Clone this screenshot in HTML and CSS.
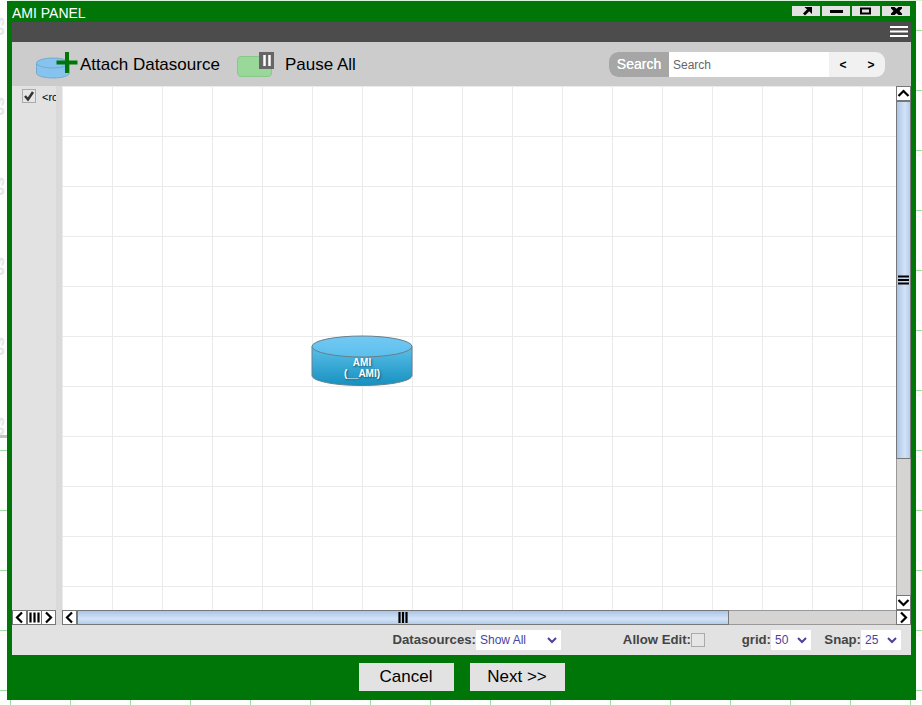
FILE: index.html
```html
<!DOCTYPE html>
<html lang="en">
<head>
<meta charset="utf-8">
<title>AMI Panel</title>
<link rel="stylesheet" href="styles.css">
</head>
<body>
<div class="backdrop">
  <div class="lines left"></div><div class="lines right"></div><div class="lines bottom"></div><div class="lines top"></div>
  <div class="axis"><span>0s</span><span>0s</span><span>0s</span><span>0s</span><span>0s</span><span>0s</span></div>
  <div class="axis-rule"></div>
</div>
<main class="window">
  <header class="titlebar">
    <span class="title">AMI PANEL</span>
    <div class="controls">
      <button><svg width="28" height="10"><path d="M12 8.500l5-5" fill="none" stroke="#000" stroke-width="2.800"/><path d="M12.500 1H20v7l-2.500-2.500-3-2.500z"/></svg></button>
      <button><svg width="28" height="10"><path d="M8 4h13v3H8z"/></svg></button>
      <button><svg width="28" height="10"><path d="M9 2.500h9v5H9z" fill="none" stroke="#000" stroke-width="2"/></svg></button>
      <button><svg width="28" height="10"><path d="M9 1h3.500l2 1.800 2-1.800H20v1.500L17.500 5 20 7.500V9h-3.500l-2-1.800-2 1.800H9V7.500L11.500 5 9 2.500z"/></svg></button>
    </div>
  </header>
  <div class="menubar"><svg width="18" height="11"><path d="M0 1h18M0 5.500h18M0 10h18" stroke="#fff" stroke-width="1.800"/></svg></div>
  <div class="toolbar">
    <svg class="ds-icon" width="42" height="28"><path d="M.5 12v10c0 2.800 7.400 5 16.500 5s16.500-2.200 16.500-5V12" fill="#86c4ef" stroke="#74aace"/><ellipse cx="17" cy="12" rx="16.500" ry="5" fill="#86c4ef" stroke="#74aace"/><path d="M31 1v21M20.500 11.500h21" stroke="#007508" stroke-width="4"/></svg>
    <span class="tool-label attach">Attach Datasource</span>
    <svg class="pause-icon" width="38" height="26"><rect x=".5" y="4.500" width="34" height="20" rx="3.500" fill="#99d899" stroke="#88c888"/><path d="M22 0h15v17H22z" fill="#666"/><path d="M27.500 3v11M32.500 3v11" stroke="#fff" stroke-width="2.500"/></svg>
    <span class="tool-label">Pause All</span>
    <div class="search"><span class="search-tag">Search</span><input type="text" placeholder="Search"><button>&lt;</button><button>&gt;</button></div>
  </div>
  <div class="body">
    <aside class="tree">
      <div class="tree-row"><span class="check"><svg width="12" height="12"><path d="M2 6l3 3.500L10 2" fill="none" stroke="#333" stroke-width="2.500"/></svg></span><span class="root">&lt;root&gt;</span></div>
      <div class="mini-scroll"><span class="sbtn"><svg width="13" height="13"><path d="M9 1.500L4 6.500 9 11.500"/></svg></span><span class="sbtn"><svg width="13" height="13"><path d="M2.500 1.500v10M6.500 1.500v10M10.500 1.500v10"/></svg></span><span class="sbtn"><svg width="13" height="13"><path d="M4 1.500l5 5-5 5"/></svg></span></div>
    </aside>
    <div class="divider"></div>
    <section class="viewer">
      <div class="canvas">
        <div class="node">
          <svg width="102" height="52"><defs><linearGradient id="side" x1="0" y1="0" x2="0" y2="1"><stop offset="0" stop-color="#5bbfe9"/><stop offset="1" stop-color="#1691bf"/></linearGradient><linearGradient id="lid" x1="0" y1="0" x2="0" y2="1"><stop offset="0" stop-color="#74c8f4"/><stop offset="1" stop-color="#5bbfec"/></linearGradient></defs><path d="M1 11.500v29C1 46 23 50.500 51 50.500s50-4.500 50-10v-29" fill="url(#side)" stroke="#667f8b"/><ellipse cx="51" cy="11.500" rx="50" ry="10.500" fill="url(#lid)" stroke="#667f8b"/></svg>
          <div class="node-text">AMI<br>(__AMI)</div>
        </div>
      </div>
      <div class="vscroll"><span class="sbtn"><svg width="13" height="13"><path d="M1.500 9l5-5 5 5"/></svg></span><div class="vthumb"><svg width="11" height="10"><path d="M0 1.500h11M0 5h11M0 8.500h11"/></svg></div><div class="track"></div><span class="sbtn"><svg width="13" height="13"><path d="M1.500 4l5 5 5-5"/></svg></span></div>
      <div class="hscroll"><span class="sbtn"><svg width="13" height="13"><path d="M9 1.500L4 6.500 9 11.500"/></svg></span><div class="hthumb"><svg width="10" height="11"><path d="M1.500 0v11M5 0v11M8.500 0v11"/></svg></div><div class="track"></div><span class="sbtn"><svg width="13" height="13"><path d="M4 1.500l5 5-5 5"/></svg></span></div>
    </section>
  </div>
  <div class="status">
    <label class="f-ds">Datasources:</label><div class="select wide">Show All<svg width="10" height="7"><path d="M1 1l4 4 4-4"/></svg></div>
    <label class="f-edit">Allow Edit:</label><span class="check off"></span>
    <label class="f-grid">grid:</label><div class="select">50<svg width="10" height="7"><path d="M1 1l4 4 4-4"/></svg></div>
    <label class="f-snap">Snap:</label><div class="select">25<svg width="10" height="7"><path d="M1 1l4 4 4-4"/></svg></div>
  </div>
  <footer class="actions"><button>Cancel</button><button>Next &gt;&gt;</button></footer>
</main>
</body>
</html>
```
FILE: styles.css
```css
* { box-sizing: border-box; }
body { margin: 0; width: 922px; height: 705px; overflow: hidden; background: #fdfffd; font-family: "Liberation Sans", Arial, sans-serif; position: relative; }
button { border: 0; padding: 0; font-family: inherit; color: #000; }
svg { display: block; flex: none; }
.backdrop { position: absolute; inset: 0; overflow: hidden; }
.lines { position: absolute; }
.left { left: 0; top: 450px; width: 7px; bottom: 0; background: repeating-linear-gradient(#a0dca5 0 1px, transparent 1px 60px); }
.right { right: 0; top: 30px; width: 6px; bottom: 0; background: repeating-linear-gradient(#94e49b 0 1px, transparent 1px 60px); }
.bottom { left: 10px; right: 0; top: 700px; bottom: 0; background: repeating-linear-gradient(90deg, #a0dca5 0 1px, transparent 1px 60px); }
.top { left: 10px; right: 0; top: 0; height: 1px; background: #d8f3d9; }
.axis { position: absolute; left: -9px; top: 17px; display: flex; flex-direction: column; color: #e6e6e6; font-size: 17px; font-weight: bold; }
.axis span { height: 80px; writing-mode: vertical-rl; transform: rotate(180deg); text-align: right; line-height: 16px; }
.axis-rule { position: absolute; left: 0; top: 435px; width: 7px; height: 3px; background: #c4c4c4; }
.window { position: relative; margin: 1px 0 0 7px; width: 909px; height: 699px; padding: 0 5px; background: #007508; display: flex; flex-direction: column; }
.titlebar { height: 21px; display: flex; justify-content: space-between; color: #fff; font-size: 14px; line-height: 24px; }
.controls { display: flex; gap: 2px; padding: 5px 1px 0 0; }
.controls button { width: 28px; height: 10px; background: #e2e2e2; }
.menubar { height: 20px; background: #4c4c4c; display: flex; justify-content: flex-end; padding: 4px 3px 0 0; }
.toolbar { height: 44px; background: #ccc; display: flex; align-items: flex-start; padding-left: 24px; }
.ds-icon { margin-top: 9px; }
.pause-icon { margin: 10px 10px 0 16px; }
.tool-label { font-size: 17px; line-height: 46px; height: 44px; white-space: nowrap; }
.attach { width: 141px; margin-left: 2px; }
.search { margin: 10px 26px 0 auto; width: 276px; height: 25px; display: flex; border-radius: 9px; overflow: hidden; background: #f1f1f1; }
.search-tag { width: 60px; background: #a6a6a6; color: #fff; font-size: 14px; line-height: 25px; text-align: center; text-shadow: 0 0 .5px #fff; }
.search input { width: 160px; border: 0; padding: 0 4px; font: 12px "Liberation Sans", sans-serif; background: #fff; }
.search input::placeholder { color: #666; opacity: 1; }
.search button { width: 28px; background: transparent; font-size: 12px; font-weight: bold; }
.body { height: 539px; display: flex; background: #e2e2e2; }
.tree { width: 44px; display: flex; flex-direction: column; justify-content: space-between; overflow: hidden; }
.tree-row { display: flex; padding: 3px 0 0 10px; font-size: 11px; line-height: 17px; }
.check { flex: none; width: 14px; height: 14px; border: 1px solid #aaa; background: #e6e6e6; }
.root { margin-left: 6px; }
.mini-scroll { display: flex; height: 15px; }
.sbtn { flex: none; width: 15px; height: 15px; background: #fff; border: 1px solid #777; }
.sbtn + .sbtn { margin-left: -.5px; }
.sbtn path, .vthumb path, .hthumb path { fill: none; stroke: #000; stroke-width: 2.2; }
.divider { width: 6px; background: #dadada; }
.viewer { width: 849px; display: grid; grid-template-columns: 834px 15px; grid-template-rows: 524px 15px; }
.canvas { position: relative; background-color: #fff; background-image: linear-gradient(90deg, #ebebeb 1px, transparent 1px), linear-gradient(#ebebeb 1px, transparent 1px); background-size: 50px 50px; border-top: 1px solid #ebebeb; background-position: 0 -1px; }
.node { position: absolute; left: 249px; top: 248px; width: 102px; height: 52px; }
.node-text { position: absolute; inset: 22px 0 auto; color: #fff; font-size: 10px; font-weight: bold; line-height: 11px; text-align: center; text-shadow: 1px 1px 2px #17556a; }
.vscroll { display: flex; flex-direction: column; }
.vthumb { height: 358px; display: flex; align-items: center; justify-content: center; border: 1px solid #777; background: linear-gradient(90deg, #aac5e8, #d3e3f6 60%, #b3cdec); }
.track { flex: 1; background: #d5d4d2; border: 1px solid #999; border-width: 0 1px; }
.hscroll { grid-column: 1 / 3; display: flex; }
.hthumb { width: 652px; display: flex; align-items: center; justify-content: center; border: 1px solid #777; background: linear-gradient(#aac5e8, #d3e3f6 60%, #b3cdec); }
.hscroll .track { border-width: 1px 0; }
.status { height: 30px; display: flex; align-items: flex-start; padding-top: 5px; background: #e2e2e2; color: #444; }
.status label { flex: none; text-align: right; font-size: 13.2px; font-weight: bold; line-height: 20px; white-space: nowrap; }
.f-ds { width: 464px; }
.f-edit { width: 130px; }
.f-grid { width: 66px; }
.f-snap { width: 50px; }
.select { flex: none; width: 40px; height: 20px; padding: 0 4px; display: flex; justify-content: space-between; align-items: center; background: #fff; color: #4b429f; font-size: 12px; }
.select.wide { width: 85px; }
.select path { fill: none; stroke: #4b429f; stroke-width: 2; }
.off { margin-top: 3px; }
.actions { display: flex; justify-content: center; gap: 16px; padding-top: 8px; }
.actions button { width: 95px; height: 28px; background: #e2e2e2; font-size: 17px; }
```
